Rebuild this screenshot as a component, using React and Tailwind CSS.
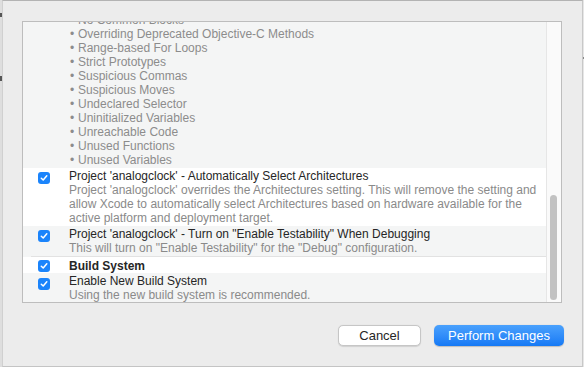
import React from 'react';

const bullets = [
  'No Common Blocks',
  'Overriding Deprecated Objective-C Methods',
  'Range-based For Loops',
  'Strict Prototypes',
  'Suspicious Commas',
  'Suspicious Moves',
  'Undeclared Selector',
  'Uninitialized Variables',
  'Unreachable Code',
  'Unused Functions',
  'Unused Variables',
];

const Check = ({ className = '' }) => (
  <div className={`w-[12px] h-[12px] rounded-[3px] bg-[#1b84fb] flex items-center justify-center shrink-0 ${className}`}>
    <svg width="8" height="8" viewBox="0 0 8 8" fill="none">
      <path d="M1.3 4.2 L3.2 6 L6.8 1.8" stroke="white" strokeWidth="1.5" strokeLinecap="round" strokeLinejoin="round" />
    </svg>
  </div>
);

const Row = ({ title, desc = [], bold, bg, checkTop, className = '' }) => (
  <div className={`flex ${bg} ${className}`}>
    <div className="w-[46px] shrink-0 pl-[15px]">
      <Check className={checkTop} />
    </div>
    <div className="flex flex-col">
      <p className={`h-[14px] leading-[14px] text-[#262626] whitespace-nowrap ${bold ? 'font-bold' : ''}`}>{title}</p>
      {desc.map((d, i) => (
        <p key={i} className="h-[14px] leading-[14px] text-[#8a8a8a] whitespace-nowrap">{d}</p>
      ))}
    </div>
  </div>
);

export default function App() {
  return (
    <div className="w-[584px] h-[367px] flex bg-[#e4e4e4] overflow-hidden text-[12px]" style={{ fontFamily: '"Liberation Sans", Arial, sans-serif' }}>
      {/* window behind, left edge */}
      <div className="w-[2px] shrink-0 flex flex-col bg-[#dedede]">
        <div className="h-[13px]" />
        <div className="h-[4px] bg-[#555]" />
        <div className="h-[59px]" />
        <div className="h-[5px] bg-[#555]" />
      </div>

      {/* sheet */}
      <div className="flex-1 flex flex-col bg-[#ececec] border-t border-[#b3b3b3] border-l border-b border-r border-l-[#d0d0d0] border-r-[#c8c8c8] border-b-[#c4c4c4]">
        <div className="pl-[19px] pt-[20px]">
          <div className="w-[540px] h-[282px] flex border border-[#bdbdbd] bg-[#f4f5f5]">
            <div className="flex-1 overflow-hidden">
              <div className="mt-[-9px]">
                <div className="pl-[46px] pb-[1px] bg-[#f4f5f5]">
                  {bullets.map((b) => (
                    <p key={b} className="h-[14px] leading-[14px] text-[#8c8c8c] flex">
                      <span className="w-[9px] pl-[1px]">•</span>
                      <span>{b}</span>
                    </p>
                  ))}
                </div>
                <Row
                  bg="bg-white"
                  className="pt-[1px] pb-[1px]"
                  checkTop="mt-[3px]"
                  title="Project 'analogclock' - Automatically Select Architectures"
                  desc={[
                    "Project 'analogclock' overrides the Architectures setting. This will remove the setting and",
                    'allow Xcode to automatically select Architectures based on hardware available for the',
                    'active platform and deployment target.',
                  ]}
                />
                <Row
                  bg="bg-[#f4f5f5]"
                  className="pt-[1px] pb-[1px]"
                  checkTop="mt-[3px]"
                  title={'Project \'analogclock\' - Turn on "Enable Testability" When Debugging'}
                  desc={['This will turn on "Enable Testability" for the "Debug" configuration.']}
                />
                <div className="ml-[8px] h-px bg-[#e2e2e2]" />
                <Row
                  bg="bg-white"
                  className="pt-[2px]"
                  checkTop="mt-[1px]"
                  bold
                  title="Build System"
                />
                <Row
                  bg="bg-[#f4f5f5]"
                  className="pt-[1px]"
                  checkTop="mt-[4px]"
                  title="Enable New Build System"
                  desc={['Using the new build system is recommended.']}
                />
              </div>
            </div>
            {/* scrollbar */}
            <div className="w-[15px] shrink-0 bg-[#fafafa] border-l border-[#e6e6e6] flex flex-col pt-[173px] pl-[3px]">
              <div className="w-[7px] h-[105px] rounded-full bg-[#c2c2c2]" />
            </div>
          </div>
        </div>

        <div className="flex justify-end gap-[13px] pr-[18px] pt-[22px] text-[13px]">
          <button className="w-[83px] h-[21px] rounded-[5px] bg-white border border-[#c6c6c6] text-[#262626] shadow-[0_0.5px_1px_rgba(0,0,0,0.12)] leading-[19px]">
            Cancel
          </button>
          <button className="w-[130px] h-[21px] rounded-[5px] bg-gradient-to-b from-[#4aa1fd] to-[#1479f5] text-white leading-[21px] shadow-[0_0.5px_1px_rgba(0,0,0,0.2)]">
            Perform Changes
          </button>
        </div>
      </div>

      {/* window behind, right edge */}
      <div className="w-[1px] shrink-0 flex flex-col bg-[#e6e6e6]">
        <div className="h-[57px]" />
        <div className="h-[2px] bg-[#888]" />
      </div>
    </div>
  );
}
